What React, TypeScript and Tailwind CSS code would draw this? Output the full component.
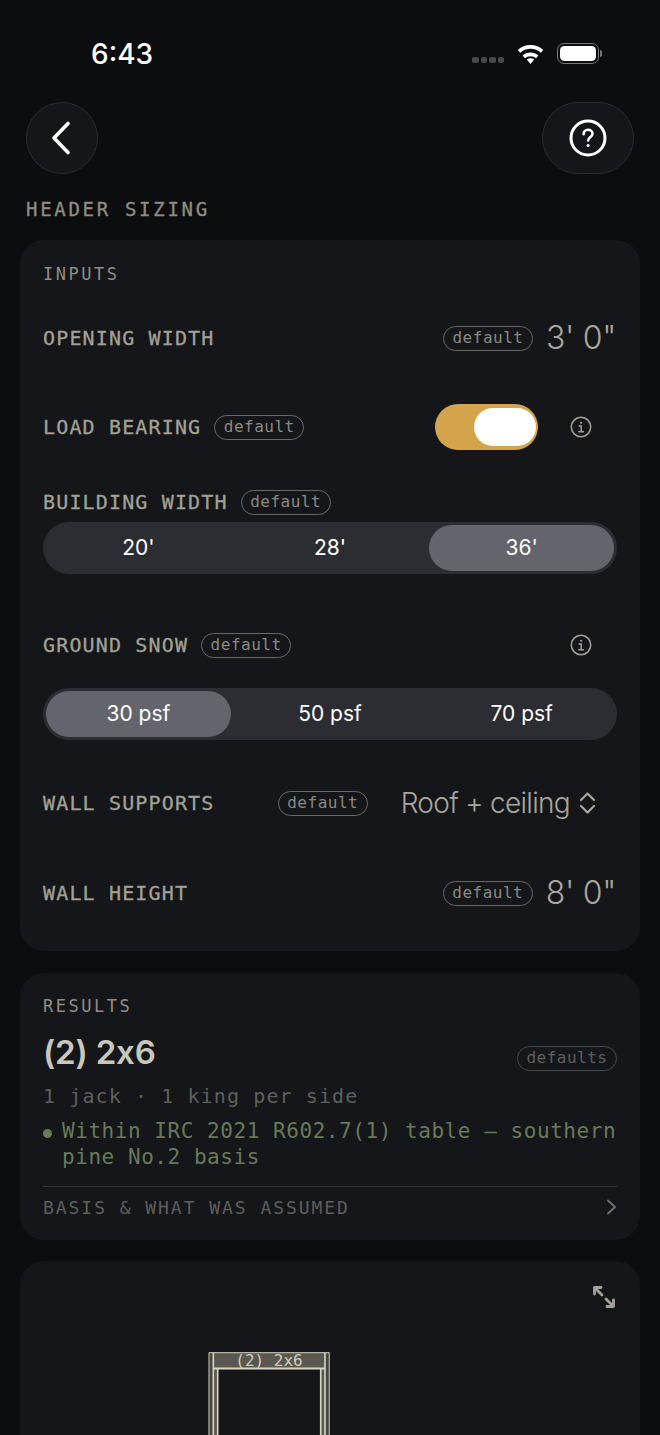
import React from "react";

function Badge({ label = "default", className = "border-[#696963] text-[#8b8981]" }: { label?: string; className?: string }) {
  return (
    <span className={`inline-flex h-[25px] items-center justify-center rounded-full border-[1.5px] px-[8.5px] text-[16px] tracking-[0.5px] ${className}`}>
      {label}
    </span>
  );
}

function Info() {
  return (
    <svg width="22" height="22" viewBox="0 0 22 22" fill="none" stroke="#a5a398" strokeWidth="1.5" strokeLinecap="round">
      <circle cx="11" cy="11" r="9.7" />
      <circle cx="11" cy="6.8" r="0.7" fill="#a5a398" strokeWidth="0.8" />
      <path d="M9 10h2.2v5.6M8.8 15.8h4.6" />
    </svg>
  );
}

function Label({ children }: { children: React.ReactNode }) {
  return <span className="text-[20px] tracking-[1.15px] text-[#a3a195] [-webkit-text-stroke:0.3px]">{children}</span>;
}

function Value({ children }: { children: React.ReactNode }) {
  return <span className="font-['Inter'] text-[32px] font-light tracking-[-0.3px] text-[#a9a79c]">{children}</span>;
}

function Segment({ options, active }: { options: string[]; active: number }) {
  return (
    <div className="grid h-[52px] grid-cols-3 gap-[7px] rounded-full bg-[#2c2d33] p-[3px] font-['Inter'] text-[21px] text-white">
      {options.map((o, i) => (
        <div key={o} className={`flex items-center justify-center rounded-full ${i === active ? "bg-[#64656c]" : ""}`}>
          {o}
        </div>
      ))}
    </div>
  );
}

export default function App() {
  return (
    <div className="h-[1435px] w-[660px] overflow-hidden bg-[#0c0d0f] font-['DejaVu_Sans_Mono',monospace]">
      <div className="flex h-[102px] items-start justify-between pl-[91px] pr-[58px] pt-[34px]">
        <span className="font-['Inter'] text-[28px] font-medium leading-[40px] text-white">6:43</span>
        <div className="flex items-center pt-[9px]">
          <div className="mr-[13px] mt-[12px] flex gap-[2px]">
            {[0, 1, 2, 3].map((i) => (
              <span key={i} className="h-[6px] w-[6.5px] rounded-[2px] bg-[#48494b]" />
            ))}
          </div>
          <svg width="27" height="21" viewBox="0 0 27 21" fill="#fff" className="mr-[13px]">
            <path d="M13.5 21 9.8 16.6c2.2-1.7 5.2-1.7 7.4 0Z" />
            <path d="M13.5 9.6c-3 0-5.8 1-7.9 2.9l2.3 2.7c1.5-1.3 3.5-2 5.6-2s4.1.7 5.6 2l2.3-2.7c-2.1-1.9-4.9-2.9-7.9-2.9Z" />
            <path d="M13.5 2C8.6 2 4.2 3.8.8 6.9L3.2 9.7c2.7-2.5 6.4-4 10.3-4s7.6 1.5 10.3 4l2.4-2.8C22.8 3.8 18.4 2 13.5 2Z" />
          </svg>
          <div className="flex items-center">
            <div className="h-[21px] w-[42px] rounded-[7px] border-[1.5px] border-[#77787a] p-[2px]">
              <div className="h-full w-full rounded-[4.5px] bg-white" />
            </div>
            <div className="ml-[1px] h-[7px] w-[2px] rounded-r-full bg-[#77787a]" />
          </div>
        </div>
      </div>

      <div className="flex items-start justify-between pl-[26px] pr-[26px]">
        <button className="flex h-[72px] w-[72px] items-center justify-center rounded-full border border-[#2a2c2f] bg-[#141619]">
          <svg width="24" height="36" viewBox="0 0 24 36" fill="none" stroke="#fff" strokeWidth="3.6" strokeLinecap="round" strokeLinejoin="round" className="-ml-[3px]">
            <path d="M19 3.5 5 18l14 14.5" />
          </svg>
        </button>
        <button className="flex h-[72px] w-[92px] items-center justify-center rounded-full border border-[#2a2c2f] bg-[#141619]">
          <svg width="38" height="38" viewBox="0 0 38 38" fill="none" stroke="#fff" strokeWidth="3" strokeLinecap="round">
            <circle cx="19" cy="19" r="17" />
            <path d="M14.6 15.2c0-2.7 2-4.4 4.5-4.4s4.400 1.700 4.400 3.900c0 3.400-4.400 3.600-4.400 6.700" strokeWidth="2.6" />
            <circle cx="19.100" cy="26.500" r="0.6" fill="#fff" strokeWidth="2" />
          </svg>
        </button>
      </div>

      <div className="ml-[26px] mt-[22px] h-[26px] text-[19px] leading-[26px] tracking-[2.7px] text-[#8f8d80] [-webkit-text-stroke:0.3px]">HEADER SIZING</div>

      <section className="mx-[20px] mt-[18px] h-[711px] rounded-[24px] bg-[#141619] px-[23px] pt-[24px]">
        <div className="h-[20px] text-[17px] leading-[20px] tracking-[2.5px] text-[#8f8d84]">INPUTS</div>

        <div className="mt-[32px] flex h-[44px] items-center justify-between">
          <Label>OPENING WIDTH</Label>
          <div className="flex items-center gap-[13px] pr-[1px]">
            <Badge />
            <Value>3' 0"</Value>
          </div>
        </div>

        <div className="mt-[44px] flex h-[46px] items-center justify-between">
          <div className="flex items-center gap-[13px]">
            <Label>LOAD BEARING</Label>
            <Badge />
          </div>
          <div className="flex items-center gap-[32px] pr-[25px]">
            <div className="flex h-[46px] w-[103px] items-center justify-end rounded-full bg-[#d4a44c] pr-[2px]">
              <div className="h-[38px] w-[62px] rounded-full bg-white" />
            </div>
            <Info />
          </div>
        </div>

        <div className="mt-[40px] flex h-[24px] items-center gap-[13px]">
          <Label>BUILDING WIDTH</Label>
          <Badge />
        </div>
        <div className="mt-[8px]">
          <Segment options={["20'", "28'", "36'"]} active={2} />
        </div>

        <div className="mt-[59px] flex h-[24px] items-center justify-between">
          <div className="flex items-center gap-[13px]">
            <Label>GROUND SNOW</Label>
            <Badge />
          </div>
          <div className="pr-[25px]">
            <Info />
          </div>
        </div>
        <div className="mt-[31px]">
          <Segment options={["30 psf", "50 psf", "70 psf"]} active={0} />
        </div>

        <div className="mt-[51px] flex h-[24px] items-center justify-between">
          <Label>WALL SUPPORTS</Label>
          <div className="flex items-center pr-[21px]">
            <Badge className="mr-[33px] border-[#696963] text-[#8b8981]" />
            <span className="mr-[9px] font-['Inter'] text-[28px] font-light tracking-[-0.7px] text-[#a9a79c]">Roof + ceiling</span>
            <svg width="17" height="24" viewBox="0 0 17 24" fill="none" stroke="#a9a79c" strokeWidth="2.2" strokeLinecap="round" strokeLinejoin="round">
              <path d="M2 9 8.500 2.500 15 9M2 15l6.500 6.500L15 15" />
            </svg>
          </div>
        </div>

        <div className="mt-[66px] flex h-[24px] items-center justify-between">
          <Label>WALL HEIGHT</Label>
          <div className="flex items-center gap-[13px] pr-[1px]">
            <Badge />
            <Value>8' 0"</Value>
          </div>
        </div>
      </section>

      <section className="mx-[20px] mt-[22px] h-[267px] rounded-[24px] bg-[#141619] px-[23px] pt-[23px]">
        <div className="h-[20px] text-[17px] leading-[20px] tracking-[2.5px] text-[#8f8d84]">RESULTS</div>
        <div className="mt-[17px] flex h-[40px] items-center justify-between">
          <span className="font-['Inter'] text-[33px] font-semibold tracking-[-0.2px] text-[#c9c7bb]">(2) 2x6</span>
          <Badge label="defaults" className="mt-[10px] border-[#48484a] text-[#5f5f5c]" />
        </div>
        <div className="mt-[11px] h-[24px] text-[20px] leading-[24px] tracking-[1.1px] text-[#5f5f5c]">1 jack · 1 king per side</div>
        <div className="mt-[10px] flex items-start">
          <span className="mr-[10px] mt-[11px] h-[9px] w-[9px] shrink-0 rounded-full bg-[#69795a]" />
          <p className="text-[21px] leading-[26px] tracking-[0.55px] text-[#69795a]">
            Within IRC 2021 R602.7(1) table — southern pine No.2 basis
          </p>
        </div>
        <div className="mt-[16px] flex h-[41px] items-center justify-between border-t border-[#333437]">
          <span className="text-[18px] tracking-[1.95px] text-[#5e5e5b]">BASIS &amp; WHAT WAS ASSUMED</span>
          <svg width="11" height="16" viewBox="0 0 11 16" fill="none" stroke="#6e6e6b" strokeWidth="2" strokeLinecap="round" strokeLinejoin="round">
            <path d="m2 1.500 7 6.500-7 6.500" />
          </svg>
        </div>
      </section>

      <section className="mx-[20px] mt-[21px] h-[300px] rounded-[24px] bg-[#141619] pl-[188px] pr-[24px] pt-[24px]">
        <div className="flex justify-end">
          <svg width="24" height="24" viewBox="0 0 24 24" fill="none" stroke="#a5a398" strokeWidth="2.8" strokeLinecap="round" strokeLinejoin="round">
            <path d="M2.500 9V2.500H9M2.500 2.500 10 10M21.500 15v6.500H15M21.500 21.500 14 14" />
          </svg>
        </div>
        <svg width="124" height="90" viewBox="0 0 124 90" className="mt-[43px]" fill="none" stroke="#d8d5c4" strokeWidth="1.5">
          <rect x="1" y="0.500" width="4.300" height="90" fill="#46453f" stroke="none" />
          <rect x="5.300" y="16.500" width="4.400" height="74" fill="#5a5751" stroke="none" />
          <rect x="112.700" y="16.500" width="4.300" height="74" fill="#5a5751" stroke="none" />
          <rect x="117" y="0.500" width="4.300" height="90" fill="#46453f" stroke="none" />
          <rect x="5.300" y="1" width="111.700" height="15.500" fill="#5a5751" stroke="none" />
          <path d="M1 0.600h120.300M1 0.600V90M121.300 0.600V90" strokeWidth="1.2" stroke="#b4b2a4" />
          <path d="M5.300 1V90M117 1V90M9.700 16.500V90M112.700 16.500V90" strokeWidth="1.6" />
          <path d="M5.300 16.500H117" strokeWidth="2" />
          <text x="61" y="14" textAnchor="middle" fill="#cfccbc" stroke="none" fontSize="16" fontFamily="DejaVu Sans Mono, monospace">(2) 2x6</text>
        </svg>
      </section>
    </div>
  );
}
